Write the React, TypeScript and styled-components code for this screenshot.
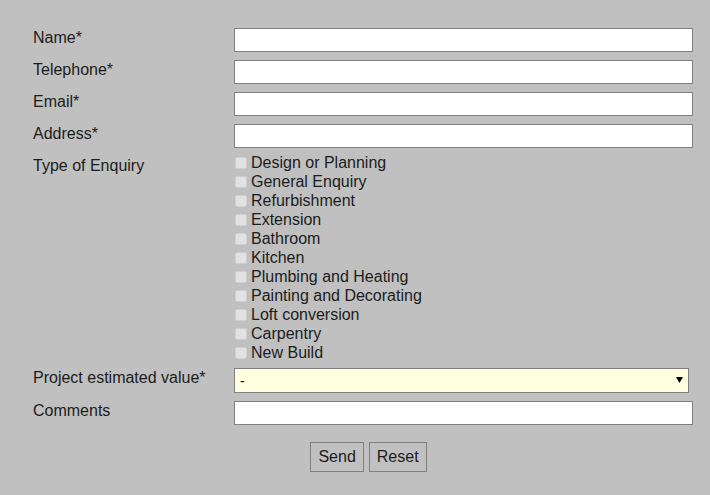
import React from 'react'
import styled, { createGlobalStyle } from 'styled-components'

const GlobalStyle = createGlobalStyle`
  html, body {
    margin: 0;
    padding: 0;
    background: #c0c0c0;
  }
  body {
    font-family: "Liberation Sans", Arial, sans-serif;
    font-size: 16px;
    color: #1c1c1c;
  }
`;

const Form = styled.form`
  width: 669px;
  padding: 28px 8px 0 33px;
`;

const Row = styled.div<{ gap?: number }>`
  display: grid;
  grid-template-columns: 201px 459px;
  margin-bottom: ${({ gap }) => gap ?? 8}px;
`;

const Label = styled.label`
  line-height: 18px;
  padding-top: 1px;
`;

const TextInput = styled.input`
  box-sizing: border-box;
  width: 459px;
  height: 24px;
  margin: 0;
  border: 1px solid #808080;
  background: #ffffff;
  font: inherit;
  padding: 0 5px;
  outline: none;
`;

const SelectWrap = styled.div`
  position: relative;
  width: 455px;
  height: 25px;
`;

const Select = styled.select`
  box-sizing: border-box;
  width: 455px;
  height: 25px;
  margin: 0;
  border: 1px solid #808080;
  background: #ffffe0;
  appearance: none;
  font: inherit;
  font-size: 14px;
  color: #000;
  padding: 0 5px;
  border-radius: 0;
  outline: none;
`;

const Arrow = styled.svg`
  position: absolute;
  right: 6px;
  top: 9px;
  pointer-events: none;
`;

const CheckList = styled.div`
  display: flex;
  flex-direction: column;
  margin-top: -3px;
`;

const CheckRow = styled.label`
  display: flex;
  align-items: center;
  height: 19px;
  line-height: 19px;
`;

const Box = styled.input`
  appearance: none;
  box-sizing: border-box;
  width: 12px;
  height: 12px;
  margin: 0 4px 0 1px;
  border: 1px solid #cfcfcf;
  border-radius: 2px;
  background: #e2e2e2;
`;

const Buttons = styled.div`
  display: flex;
  justify-content: center;
  gap: 5px;
  margin-top: 17px;
  padding-left: 2px;
`;

const Button = styled.button`
  box-sizing: border-box;
  height: 30px;
  padding: 0 7px;
  font: inherit;
  color: #1c1c1c;
  background: #c0c0c0;
  border: 1px solid #808080;
  border-radius: 0;
`;

const enquiries = [
  'Design or Planning',
  'General Enquiry',
  'Refurbishment',
  'Extension',
  'Bathroom',
  'Kitchen',
  'Plumbing and Heating',
  'Painting and Decorating',
  'Loft conversion',
  'Carpentry',
  'New Build',
];

const App = () => {
  return (
    <>
      <GlobalStyle />
      <Form onSubmit={(e) => e.preventDefault()}>
        <Row>
          <Label>Name*</Label>
          <TextInput type="text" />
        </Row>
        <Row>
          <Label>Telephone*</Label>
          <TextInput type="text" />
        </Row>
        <Row>
          <Label>Email*</Label>
          <TextInput type="text" />
        </Row>
        <Row>
          <Label>Address*</Label>
          <TextInput type="text" />
        </Row>
        <Row gap={6}>
          <Label>Type of Enquiry</Label>
          <CheckList>
            {enquiries.map((item) => (
              <CheckRow key={item}>
                <Box type="checkbox" />
                {item}
              </CheckRow>
            ))}
          </CheckList>
        </Row>
        <Row>
          <Label>Project estimated value*</Label>
          <SelectWrap>
            <Select defaultValue="-">
              <option value="-">-</option>
            </Select>
            <Arrow width="7" height="6" viewBox="0 0 7 6">
              <path d="M0 0 H7 L3.5 6 Z" fill="#000" />
            </Arrow>
          </SelectWrap>
        </Row>
        <Row>
          <Label>Comments</Label>
          <TextInput type="text" />
        </Row>
        <Buttons>
          <Button type="submit">Send</Button>
          <Button type="reset">Reset</Button>
        </Buttons>
      </Form>
    </>
  )
}

export default App
